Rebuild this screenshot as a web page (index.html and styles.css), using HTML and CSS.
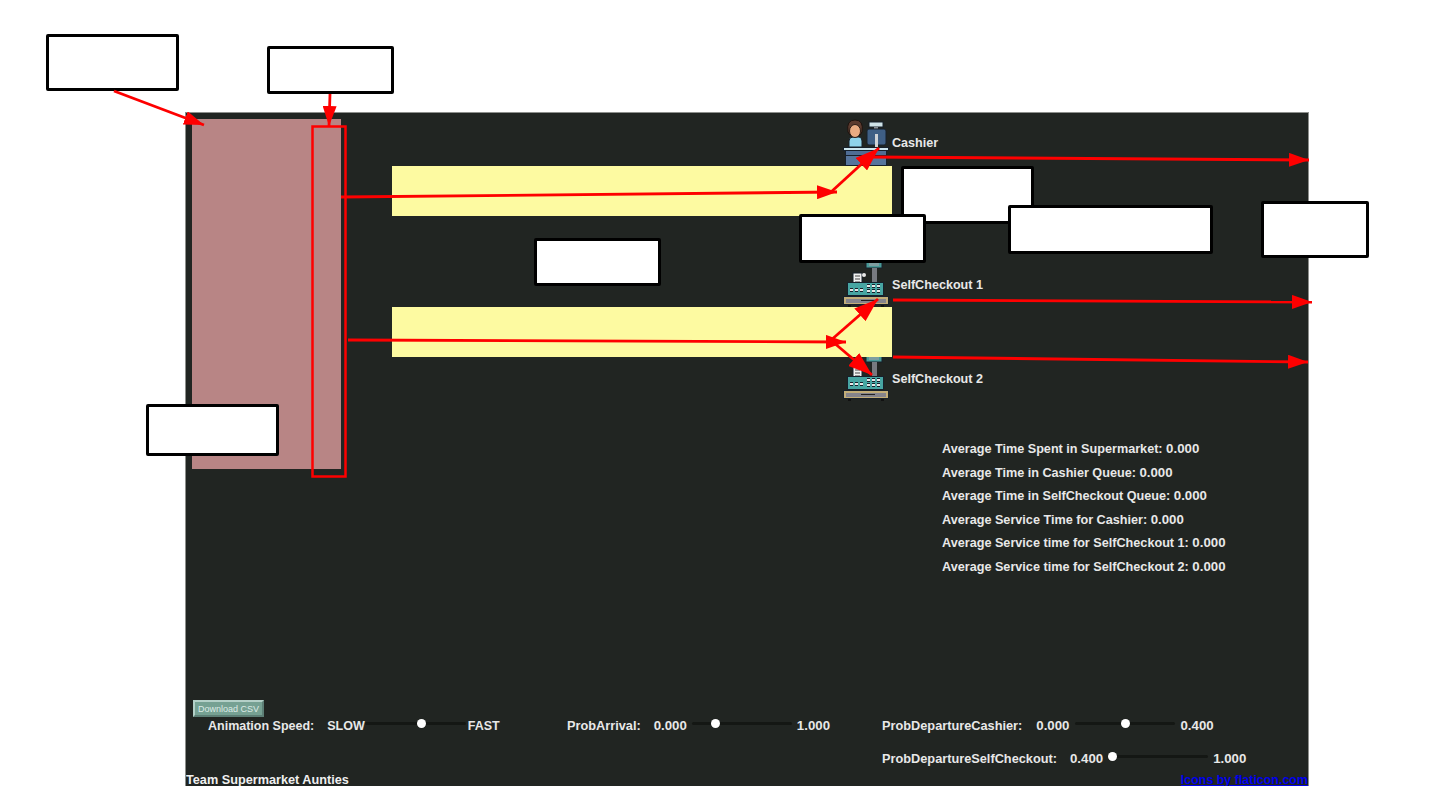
FILE: index.html
```html
<!DOCTYPE html>
<html>

<head>
	<title>Supermarket Simulation</title>
	<link rel="stylesheet" href="styles.css">
</head>

<body>
	<main class="panel">
		<div class="entrance"></div>
		<div class="queue queue-cashier"></div>
		<div class="queue queue-self"></div>

		<div class="station station-cashier">
			<svg class="icon" viewBox="0 0 46 50">
				<rect x="26" y="4" width="14" height="5" fill="#cfe3e8" stroke="#16202b"/>
				<rect x="31" y="9" width="4" height="3" fill="#8a8f96"/>
				<rect x="24" y="11" width="19" height="16" rx="2" fill="#3f5f85" stroke="#16202b"/>
				<rect x="32" y="16" width="3" height="13" fill="#d0d3d6"/>
				<path d="M6 29 v-6 q0 -4 4 -4 h6 q3 0 3 4 v6 z" fill="#8fd3ea" stroke="#16202b"/>
				<path d="M5 14 q-2 -12 7 -12 q9 0 7 12 l-2 3 h-10 z" fill="#5a3a2e" stroke="#1c120e"/>
				<ellipse cx="12" cy="13" rx="5.5" ry="6.5" fill="#e8ab82" stroke="#2a1c16"/>
				<rect x="0.5" y="29.5" width="45" height="3" fill="#cde6ee" stroke="#16202b"/>
				<rect x="2.5" y="32.5" width="41" height="5" fill="#4f6d94" stroke="#16202b"/>
				<rect x="2.5" y="37.5" width="41" height="10" fill="#56759c" stroke="#16202b"/>
			</svg>
			<span class="station-label">Cashier</span>
		</div>

		<div class="station station-self station-self1">
			<svg class="icon" viewBox="0 0 46 50">
				<rect x="23" y="3" width="16" height="8" fill="#4a9a98" stroke="#16202b"/>
				<rect x="26" y="6" width="10" height="3" fill="#7f9ea0"/>
				<rect x="29" y="11" width="5" height="14" fill="#777a80"/>
				<rect x="10" y="16" width="9" height="14" fill="#f2f2f2" stroke="#16202b"/>
				<path d="M12 19 h5 M12 22 h5 M12 25 h5 M12 28 h5" stroke="#444"/>
				<circle cx="21" cy="18" r="2" fill="#e8e8e8"/>
				<rect x="4.5" y="25.5" width="36" height="13" fill="#47a5a2" stroke="#16202b"/>
				<path d="M7 33 h3 M12 33 h3 M17 33 h3 M24 29 h3 M29 29 h3 M34 29 h3 M24 34 h3 M29 34 h3 M34 34 h3" stroke="#16202b" stroke-width="4"/>
				<path d="M7 33 h3 M12 33 h3 M17 33 h3 M24 29 h3 M29 29 h3 M34 29 h3 M24 34 h3 M29 34 h3 M34 34 h3" stroke="#e8e8e8" stroke-width="2"/>
				<rect x="0.5" y="39.5" width="45" height="8" fill="#c2ad78" stroke="#16202b"/>
				<rect x="3" y="42" width="40" height="4" fill="#85848c"/>
				<rect x="18" y="43" width="14" height="1" fill="#222"/>
				<rect x="5" y="48" width="3" height="2" fill="#111"/>
				<rect x="38" y="48" width="3" height="2" fill="#111"/>
			</svg>
			<span class="station-label">SelfCheckout 1</span>
		</div>

		<div class="station station-self station-self2">
			<svg class="icon" viewBox="0 0 46 50">
				<rect x="23" y="3" width="16" height="8" fill="#4a9a98" stroke="#16202b"/>
				<rect x="26" y="6" width="10" height="3" fill="#7f9ea0"/>
				<rect x="29" y="11" width="5" height="14" fill="#777a80"/>
				<rect x="10" y="16" width="9" height="14" fill="#f2f2f2" stroke="#16202b"/>
				<path d="M12 19 h5 M12 22 h5 M12 25 h5 M12 28 h5" stroke="#444"/>
				<rect x="4.5" y="25.5" width="36" height="13" fill="#47a5a2" stroke="#16202b"/>
				<path d="M7 33 h3 M12 33 h3 M17 33 h3 M24 29 h3 M29 29 h3 M34 29 h3 M24 34 h3 M29 34 h3 M34 34 h3" stroke="#16202b" stroke-width="4"/>
				<path d="M7 33 h3 M12 33 h3 M17 33 h3 M24 29 h3 M29 29 h3 M34 29 h3 M24 34 h3 M29 34 h3 M34 34 h3" stroke="#e8e8e8" stroke-width="2"/>
				<rect x="0.5" y="39.5" width="45" height="8" fill="#c2ad78" stroke="#16202b"/>
				<rect x="3" y="42" width="40" height="4" fill="#85848c"/>
				<rect x="18" y="43" width="14" height="1" fill="#222"/>
				<rect x="5" y="48" width="3" height="2" fill="#111"/>
				<rect x="38" y="48" width="3" height="2" fill="#111"/>
			</svg>
			<span class="station-label">SelfCheckout 2</span>
		</div>

		<div class="stats">
			<p>Average Time Spent in Supermarket: <span class="val">0.000</span></p>
			<p>Average Time in Cashier Queue: <span class="val">0.000</span></p>
			<p>Average Time in SelfCheckout Queue: <span class="val">0.000</span></p>
			<p>Average Service Time for Cashier: <span class="val">0.000</span></p>
			<p>Average Service time for SelfCheckout 1: <span class="val">0.000</span></p>
			<p>Average Service time for SelfCheckout 2: <span class="val">0.000</span></p>
		</div>

		<div class="controls">
			<button class="csv-btn">Download CSV</button>
			<div class="control-rows">
				<div class="control control-speed">
					<span class="control-name">Animation Speed:</span>
					<span>SLOW</span>
					<div class="slider slider-speed"><i class="thumb" style="left: 52px"></i></div>
					<span>FAST</span>
				</div>
				<div class="control control-prob control-arrival">
					<span class="control-name">ProbArrival:</span>
					<span class="val">0.000</span>
					<div class="slider"><i class="thumb" style="left: 19px"></i></div>
					<span class="val">1.000</span>
				</div>
				<div class="control control-prob control-cashier">
					<span class="control-name">ProbDepartureCashier:</span>
					<span class="val">0.000</span>
					<div class="slider"><i class="thumb" style="left: 46px"></i></div>
					<span class="val">0.400</span>
				</div>
			</div>
			<div class="control control-prob control-self">
				<span class="control-name">ProbDepartureSelfCheckout:</span>
				<span class="val">0.400</span>
				<div class="slider"><i class="thumb" style="left: 0px"></i></div>
				<span class="val">1.000</span>
			</div>
			<div class="footer">
				<span>Team Supermarket Aunties</span>
				<a href="#">Icons by flaticon.com</a>
			</div>
		</div>
	</main>

	<!-- white label boxes -->
	<div class="note" style="left: 46px; top: 34px; width: 133px; height: 57px"></div>
	<div class="note" style="left: 267px; top: 46px; width: 127px; height: 48px"></div>
	<div class="note" style="left: 146px; top: 404px; width: 133px; height: 52px"></div>
	<div class="note" style="left: 534px; top: 238px; width: 127px; height: 48px"></div>
	<div class="note" style="left: 901px; top: 166px; width: 133px; height: 58px"></div>
	<div class="note" style="left: 799px; top: 214px; width: 127px; height: 49px"></div>
	<div class="note" style="left: 1008px; top: 205px; width: 205px; height: 49px"></div>
	<div class="note" style="left: 1261px; top: 201px; width: 108px; height: 57px"></div>

	<!-- red annotation arrows -->
	<svg class="arrows" viewBox="0 0 1440 810">
		<defs>
			<marker id="head" markerUnits="userSpaceOnUse" markerWidth="20" markerHeight="14" refX="20" refY="7" orient="auto">
				<path d="M0 0 L20 7 L0 14 z" fill="#fe0000"/>
			</marker>
			<marker id="big" markerUnits="userSpaceOnUse" markerWidth="24" markerHeight="17" refX="24" refY="8.5" orient="auto">
				<path d="M0 0 L24 8.5 L0 17 z" fill="#fe0000"/>
			</marker>
		</defs>
		<rect x="312.5" y="126.5" width="33" height="350" fill="none" stroke="#fe0000" stroke-width="2.5"/>
		<path class="arrow" d="M114 91 L204 125" marker-end="url(#head)"/>
		<path class="arrow" d="M330 94 L329 126" marker-end="url(#head)"/>
		<path class="arrow" d="M341 197 L837 192" marker-end="url(#head)"/>
		<path class="arrow" d="M831 192 L879 148" marker-end="url(#big)"/>
		<path class="arrow" d="M870 157 L1309 160" marker-end="url(#head)"/>
		<path class="arrow" d="M348 340 L846 342" marker-end="url(#head)"/>
		<path class="arrow" d="M830 341 L878 299" marker-end="url(#big)"/>
		<path class="arrow" d="M833 342 L872 375" marker-end="url(#big)"/>
		<path class="arrow" d="M893 300 L1312 302" marker-end="url(#head)"/>
		<path class="arrow" d="M893 357 L1308 362" marker-end="url(#head)"/>
	</svg>
</body>

</html>
```

FILE: styles.css
```css
html, body {
	margin: 0;
	height: 810px;
	overflow: hidden;
	background: white;
}

body {
	font-family: "Liberation Sans", Arial, sans-serif;
	font-weight: bold;
	font-size: 12.75px;
	color: #e8e8e8;
}

.val {
	font-size: 13.25px;
}

.panel {
	position: relative;
	isolation: isolate;
	display: flex;
	flex-direction: column;
	box-sizing: border-box;
	width: 1124px;
	height: 674px;
	margin: 112px 0 0 185px;
	background: #212522;
	border-top: 1px solid #8d8f8c;
	border-left: 1px solid #8d8f8c;
	border-right: 1px solid #8d8f8c;
}

.entrance {
	position: absolute;
	left: 6px;
	top: 6px;
	width: 149px;
	height: 350px;
	background: #b88585;
}

.queue {
	position: absolute;
	z-index: 1;
	left: 205.7px;
	width: 500px;
	height: 50px;
	background: #fdfaa1;
}

.queue-cashier {
	top: 53.4px;
}

.queue-self {
	top: 194.3px;
}

.station {
	position: absolute;
	left: 657px;
	display: flex;
	align-items: center;
	gap: 3px;
}

.icon {
	width: 46px;
	height: 50px;
}

.station-label {
	font-size: 12.6px;
}

.station-cashier {
	top: 5px;
}

.station-self .station-label {
	margin-top: 6px;
}

.station-self1 {
	top: 144px;
}

.station-self2 {
	top: 238px;
}

.stats {
	display: flex;
	flex-direction: column;
	gap: 9.2px;
	margin: 329px 0 0 756px;
	font-size: 12.65px;
}

.stats p {
	margin: 0;
	line-height: 14.4px;
}

.controls {
	display: flex;
	flex-direction: column;
	margin-top: auto;
}

.csv-btn {
	align-self: flex-start;
	width: 71px;
	height: 17px;
	margin-left: 7px;
	padding: 0;
	border: 2px solid;
	border-color: #b4d0c8 #5d7f76 #5d7f76 #b4d0c8;
	background: #76a193;
	color: #dcebe6;
	font-family: "Liberation Sans", Arial, sans-serif;
	font-size: 9px;
}

.control-rows {
	display: flex;
	height: 18px;
}

.control {
	display: flex;
	align-items: center;
}

.control-prob span {
	margin-bottom: 1px;
}

.control-name {
	margin-right: 13px;
}

.control-speed {
	margin-left: 22px;
	width: 359px;
	font-size: 12.5px;
}

.control-arrival {
	width: 315px;
}

.control-self {
	margin: 15px 0 0 696px;
	height: 18px;
}

.slider {
	position: relative;
	width: 100px;
	height: 3px;
	margin: 0 5px 5px 5px;
	background: #141714;
	border-radius: 2px;
}

.slider-speed {
	width: 101px;
	margin: 0 2px 5px 0;
}

.control-cashier .control-name {
	margin-right: 14px;
}

.control-cashier .slider {
	margin-left: 6px;
}

.thumb {
	position: absolute;
	top: -3px;
	width: 9px;
	height: 9px;
	border-radius: 50%;
	background: white;
}

.footer {
	display: flex;
	justify-content: space-between;
	margin-top: 4px;
	height: 14px;
	line-height: 17px;
	font-size: 12.7px;
	overflow: hidden;
	color: #f0f0f0;
}

.footer a {
	font-size: 12.45px;
	color: #0000ee;
}

.note {
	position: absolute;
	box-sizing: border-box;
	background: white;
	border: 3px solid black;
	border-radius: 2px;
}

.arrows {
	position: absolute;
	left: 0;
	top: 0;
	width: 1440px;
	height: 810px;
	pointer-events: none;
}

.arrow {
	fill: none;
	stroke: #fe0000;
	stroke-width: 2.8;
}
```
